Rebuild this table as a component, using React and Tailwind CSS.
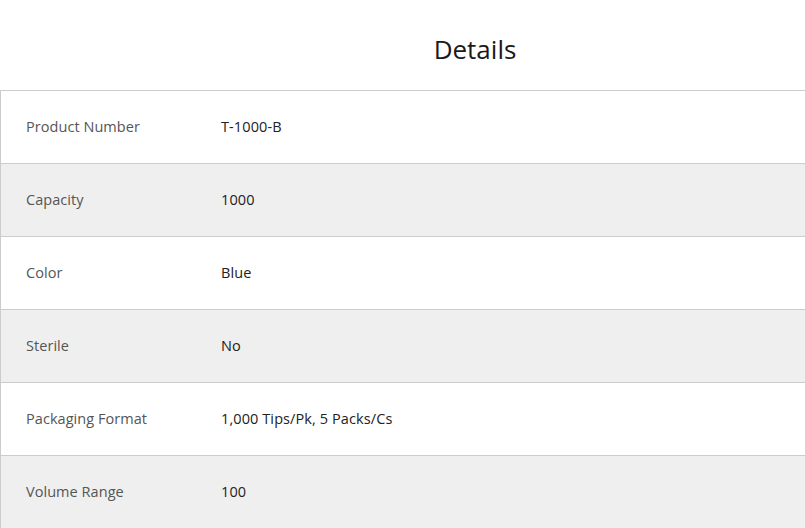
import React from 'react';

const rows = [
  { label: 'Product Number', value: 'T-1000-B' },
  { label: 'Capacity', value: '1000' },
  { label: 'Color', value: 'Blue' },
  { label: 'Sterile', value: 'No' },
  { label: 'Packaging Format', value: '1,000 Tips/Pk, 5 Packs/Cs' },
  { label: 'Volume Range', value: '100' },
];

const App = () => {
  return (
    <div className="w-[805px] h-[528px] overflow-hidden bg-white font-['Open_Sans',sans-serif]">
      <div className="w-[950px] h-[90px] flex items-center justify-center">
        <h2 className="text-[26px] text-[#1a1a1a] pt-[8px]">Details</h2>
      </div>
      <div className="w-[950px] border-t border-l border-[#cccccc]">
        {rows.map((row, i) => (
          <div
            key={row.label}
            className={`flex items-center h-[73px] border-b border-[#cccccc] ${i % 2 === 1 ? 'bg-[#efefef]' : 'bg-white'}`}
          >
            <div className="w-[220px] pl-[25px] text-[14.5px] text-[#555555] tracking-[0.05px]">{row.label}</div>
            <div className="text-[14.5px] text-[#222222] tracking-[0.1px]">{row.value}</div>
          </div>
        ))}
      </div>
    </div>
  );
};

export default App;
